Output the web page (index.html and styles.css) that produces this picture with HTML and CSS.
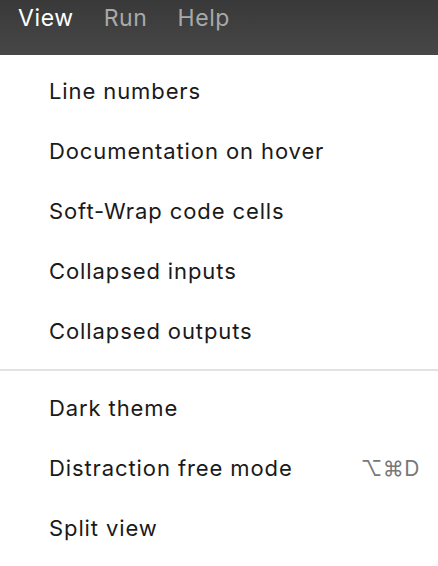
FILE: index.html
```html
<!DOCTYPE html>
<html>
<head>
<meta charset="utf-8">
<link rel="stylesheet" href="styles.css">
</head>
<body>
<div class="menubar">
  <span class="top active">View</span>
  <span class="top">Run</span>
  <span class="top">Help</span>
</div>
<div class="menu">
  <div class="item"><span>Line numbers</span></div>
  <div class="item"><span>Documentation on hover</span></div>
  <div class="item"><span>Soft-Wrap code cells</span></div>
  <div class="item"><span>Collapsed inputs</span></div>
  <div class="item"><span>Collapsed outputs</span></div>
  <div class="sep"></div>
  <div class="item"><span>Dark theme</span></div>
  <div class="item"><span>Distraction free mode</span><span class="key">⌥⌘D</span></div>
  <div class="item"><span>Split view</span></div>
</div>
</body>
</html>
```
FILE: styles.css
```css
html, body {
  margin: 0;
  padding: 0;
  background: #ffffff;
  font-family: Inter, "Noto Sans", "DejaVu Sans", sans-serif;
}
.menubar {
  height: 55px;
  box-sizing: border-box;
  background: linear-gradient(#393939, #474747);
  display: flex;
  align-items: flex-start;
  padding: 3px 0 0 18px;
  gap: 30px;
}
.top {
  font-size: 23px;
  line-height: 30px;
  letter-spacing: 0.6px;
  color: #a9a9a9;
}
.top.active {
  color: #ffffff;
}
.menu {
  padding: 6px 0;
}
.item {
  height: 60px;
  display: flex;
  align-items: center;
  justify-content: space-between;
  padding: 0 18px 0 49px;
  font-size: 22px;
  letter-spacing: 0.9px;
  color: #1a1a1a;
}
.key {
  color: #777777;
  font-size: 21px;
  letter-spacing: 0.5px;
}
.sep {
  height: 2px;
  background: #e2e2e2;
  margin: 8px 0 7px;
}
```
